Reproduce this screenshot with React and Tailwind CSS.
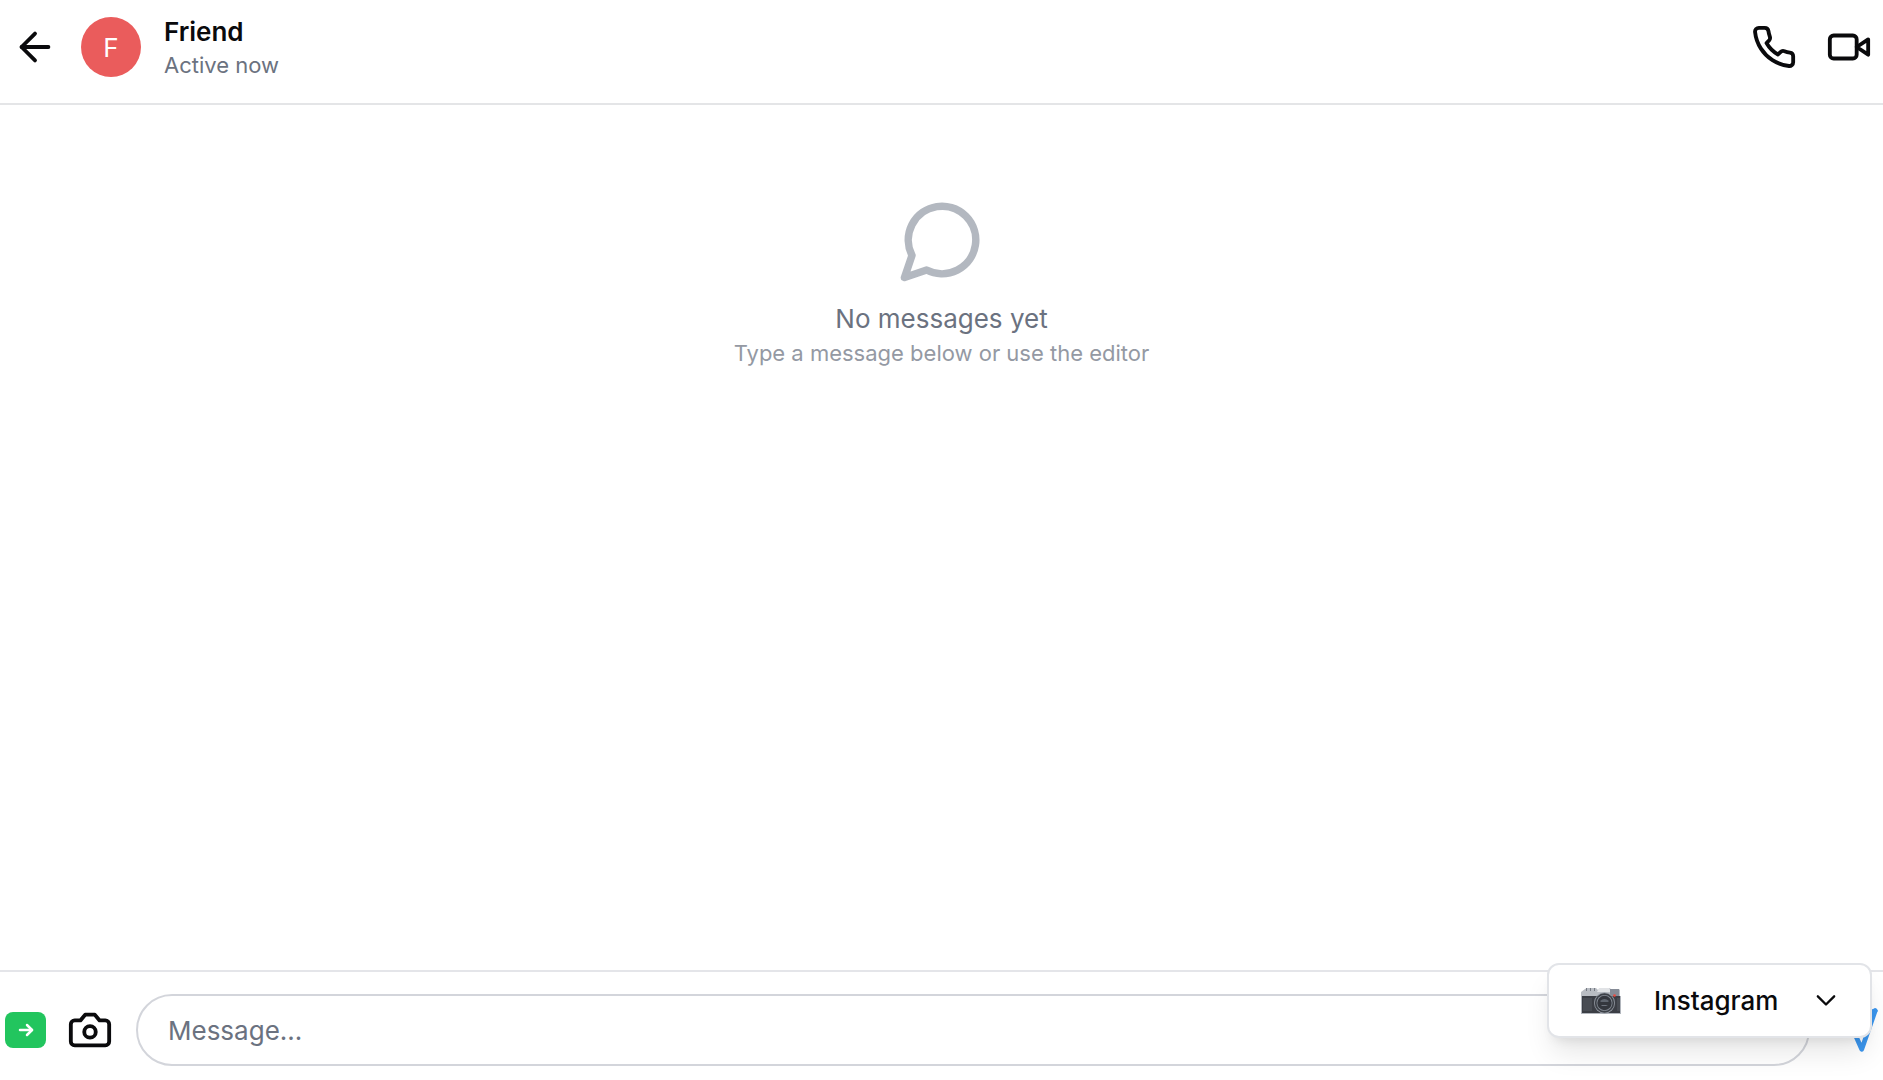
const stroke = {
  viewBox: '0 0 24 24',
  fill: 'none',
  stroke: 'currentColor',
  strokeLinecap: 'round',
  strokeLinejoin: 'round',
  'aria-hidden': true,
};

function Icon({ className = 'size-[46px]', strokeWidth = 2, children }) {
  return <svg {...stroke} strokeWidth={strokeWidth} className={`shrink-0 ${className}`}>{children}</svg>;
}

function CameraEmoji() {
  return (
    <svg viewBox="0 0 40 28" className="h-7 w-10 shrink-0" aria-hidden="true">
      <path d="M4 2 6 1h9l2 2 2-2h9l2 1h8l1 1v7H0V5z" fill="#b9bdc3" />
      <path d="M18 1h10l2 4H16z" fill="#e1e3e6" />
      <path d="M29 2h9v7h-9z" fill="#858b96" />
      <path d="M5 1h1v3H5zM9 1h1v3H9zM13 1h1v3h-1z" fill="#767b84" />
      <path d="M0 9h40v17a1 1 0 0 1-1 1H1a1 1 0 0 1-1-1z" fill="#3b3e45" />
      <path d="M2 11h9v13H2zM36 11h3v13h-3z" fill="#484c53" />
      <path d="M0 26h40v1H0zM0 9h1v18H0zM39 9h1v18h-1z" fill="#b2b6bd" />
      <circle cx="23.500" cy="16" r="10.500" fill="#9297a0" />
      <circle cx="23.500" cy="16" r="9.700" fill="#3c4047" />
      <circle cx="23.500" cy="16" r="8" fill="#858b95" />
      <circle cx="23.500" cy="16" r="7.200" fill="#34373e" />
      <path d="M19 14q4.500-4 9 0l-1 1h-7z" fill="#5f656f" />
      <path d="M20 18h7l-2 1h-4z" fill="#6d737e" />
      <circle cx="33.500" cy="8.500" r="1.300" fill="#ef4a3f" />
    </svg>
  );
}

function Header() {
  return (
    <header className="flex items-center gap-[23px] border-b-2 border-[#e4e5e7] pt-[13px] pr-[11px] pb-[22px] pl-[12px] text-[#0a0a0c]">
      <button type="button" aria-label="Back">
        <Icon>
          <path d="m12 19-7-7 7-7" />
          <path d="M19 12H5" />
        </Icon>
      </button>
      <div className="flex size-[60px] shrink-0 items-center justify-center rounded-full bg-[#ea5c5c] text-[26px] text-white">F</div>
      <div className="flex-1">
        <h1 className="pt-[2px] text-[26px] leading-[34px] font-semibold">Friend</h1>
        <p className="text-[22px] leading-[32px] text-[#6b7280]">Active now</p>
      </div>
      <div className="flex gap-[29px]">
        <button type="button" aria-label="Call">
          <Icon>
            <path d="M22 16.920v3a2 2 0 0 1-2.180 2 19.790 19.790 0 0 1-8.630-3.070 19.500 19.500 0 0 1-6-6 19.790 19.790 0 0 1-3.070-8.670A2 2 0 0 1 4.110 2h3a2 2 0 0 1 2 1.720 12.840 12.840 0 0 0 .7 2.810 2 2 0 0 1-.45 2.110L8.090 9.910a16 16 0 0 0 6 6l1.270-1.270a2 2 0 0 1 2.110-.45 12.840 12.840 0 0 0 2.810.7A2 2 0 0 1 22 16.920z" />
          </Icon>
        </button>
        <button type="button" aria-label="Video call">
          <Icon>
            <path d="m22 8-6 4 6 4V8Z" />
            <rect x="2" y="6" width="14" height="12" rx="2" />
          </Icon>
        </button>
      </div>
    </header>
  );
}

function EmptyState() {
  return (
    <main className="flex flex-1 flex-col items-center pt-[90px] text-center">
      <Icon className="size-[90px] text-[#b3b8c0]">
        <path d="M7.900 20A9 9 0 1 0 4 16.100L2 22Z" />
      </Icon>
      <p className="mt-4 text-[26px] leading-[36px] text-[#6b7280]">No messages yet</p>
      <p className="text-[22px] leading-[32px] text-[#9499a3]">Type a message below or use the editor</p>
    </main>
  );
}

function Composer() {
  return (
    <footer className="flex items-center border-t-2 border-[#e4e5e9] pt-[22px] pr-1 pb-[14px] pl-[5px]">
      <button type="button" aria-label="Switch sender" className="flex h-9 w-[41px] shrink-0 items-center justify-center rounded-lg bg-[#22c55e] text-white">
        <Icon className="size-6" strokeWidth={2.5}>
          <path d="M6 12h12" />
          <path d="m13 7 5 5-5 5" />
        </Icon>
      </button>
      <button type="button" aria-label="Camera" className="ml-[21px] text-[#0a0a0c]">
        <Icon>
          <path d="M14.500 4h-5L7 7H4a2 2 0 0 0-2 2v9a2 2 0 0 0 2 2h16a2 2 0 0 0 2-2V9a2 2 0 0 0-2-2h-3l-2.500-3z" />
          <circle cx="12" cy="13" r="3" />
        </Icon>
      </button>
      <input
        type="text"
        aria-label="Message"
        placeholder="Message..."
        className="mx-[23px] h-[72px] min-w-0 flex-1 rounded-full border-2 border-[#d3d5db] px-[30px] text-[26px] text-[#0a0a0c] outline-none placeholder:text-[#6b7280]"
      />
      <button type="button" aria-label="Send" className="text-[#3b96ee]">
        <Icon strokeWidth={2.5}>
          <path d="m22 2-7 20-4-9-9-4Z" />
          <path d="M22 2 11 13" />
        </Icon>
      </button>
    </footer>
  );
}

function PlatformPicker() {
  return (
    <button
      type="button"
      aria-haspopup="listbox"
      className="absolute right-[11px] bottom-[42px] flex h-[75px] w-[325px] items-center rounded-xl border-2 border-[#e2e4e8] bg-white pl-8 text-[26px] font-medium text-[#0a0a0c] shadow-[0_19px_28px_-5px_rgba(0,0,0,0.1),0_8px_12px_-7px_rgba(0,0,0,0.1)]"
    >
      <CameraEmoji />
      <span className="ml-[33px] flex-1 text-left">Instagram</span>
      <Icon className="mr-[30px] size-7">
        <path d="m5 8 7 7 7-7" />
      </Icon>
    </button>
  );
}

export default function App() {
  return (
    <div className="relative flex h-screen flex-col overflow-hidden bg-white font-['Inter',sans-serif]">
      <Header />
      <EmptyState />
      <Composer />
      <PlatformPicker />
    </div>
  );
}
